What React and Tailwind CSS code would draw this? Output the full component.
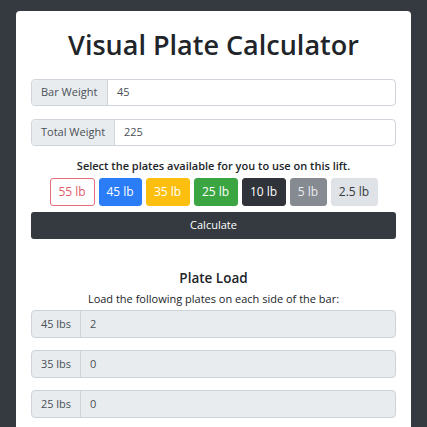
export default function App() {
  const font = { fontFamily: '"Open Sans", "Noto Sans", sans-serif' };
  const plates = [
    { t: "55 lb", w: "w-[45px]", c: "bg-white border-[#e4707b] text-[#e05d69]" },
    { t: "45 lb", w: "w-[43px]", c: "bg-[#2a7cf7] border-[#2a7cf7] text-white" },
    { t: "35 lb", w: "w-[44px]", c: "bg-[#fdbf0f] border-[#fdbf0f] text-white" },
    { t: "25 lb", w: "w-[44px]", c: "bg-[#3ba641] border-[#3ba641] text-white" },
    { t: "10 lb", w: "w-[44px]", c: "bg-[#30343a] border-[#30343a] text-white" },
    { t: "5 lb", w: "w-[37px]", c: "bg-[#868b92] border-[#868b92] text-[#e9ecef]" },
    { t: "2.5 lb", w: "w-[47px]", c: "bg-[#dfe2e6] border-[#dfe2e6] text-[#343a40]" },
  ];
  const rows = [
    ["45 lbs", "2"],
    ["35 lbs", "0"],
    ["25 lbs", "0"],
  ];
  return (
    <div className="min-h-[427px] bg-[#343a40] pt-[11px] px-[16px] overflow-hidden" style={font}>
      <div className="bg-white rounded-t-[4px] px-[15px] pb-[20px]">
        <h1 className="pt-[17px] h-[68px] text-center text-[27px] leading-[34px] text-[#212529] font-semibold">
          Visual Plate Calculator
        </h1>
        <div className="flex h-[27px] border border-[#ced4da] rounded-[4px] text-[11px] text-[#495057]">
          <div className="w-[76px] bg-[#e9ecef] border-r border-[#ced4da] rounded-l-[4px] flex items-center pl-[9px]">
            Bar Weight
          </div>
          <div className="flex-1 flex items-center pl-[9px]">45</div>
        </div>
        <div className="mt-[13px] flex h-[27px] border border-[#ced4da] rounded-[4px] text-[11px] text-[#495057]">
          <div className="w-[83px] bg-[#e9ecef] border-r border-[#ced4da] rounded-l-[4px] flex items-center pl-[9px]">
            Total Weight
          </div>
          <div className="flex-1 flex items-center pl-[9px]">225</div>
        </div>
        <p className="mt-[11px] text-center text-[11px] leading-[18px] text-[#212529] font-semibold">
          Select the plates available for you to use on this lift.
        </p>
        <div className="mt-[3px] flex justify-center gap-[4px]">
          {plates.map((p) => (
            <div
              key={p.t}
              className={`h-[28px] ${p.w} flex items-center justify-center border rounded-[3px] text-[12px] ${p.c}`}
            >
              {p.t}
            </div>
          ))}
        </div>
        <div className="mt-[6px] h-[27px] bg-[#343a40] rounded-[3px] flex items-center justify-center text-white text-[11px]">
          Calculate
        </div>
        <h2 className="mt-[29px] text-center text-[13.5px] leading-[20px] font-semibold text-[#212529]">
          Plate Load
        </h2>
        <p className="mt-[3px] text-center text-[11px] leading-[16px] text-[#212529]">
          Load the following plates on each side of the bar:
        </p>
        <div className="mt-[3px] flex flex-col gap-[12px]">
          {rows.map(([a, b]) => (
            <div key={a} className="flex h-[28px] border border-[#ced4da] rounded-[4px] bg-[#e9ecef] text-[11px] text-[#495057]">
              <div className="w-[49px] border-r border-[#ced4da] flex items-center justify-center">{a}</div>
              <div className="flex-1 flex items-center pl-[9px]">{b}</div>
            </div>
          ))}
        </div>
      </div>
    </div>
  );
}
